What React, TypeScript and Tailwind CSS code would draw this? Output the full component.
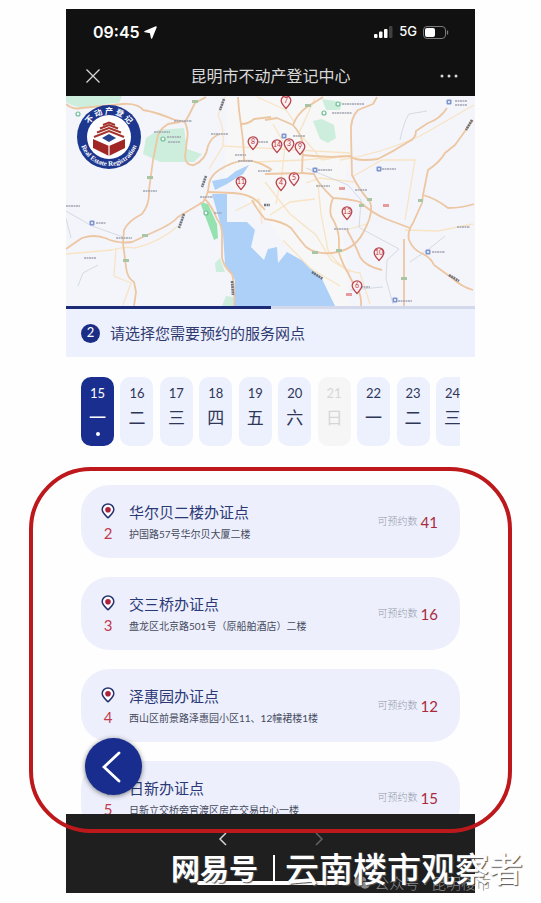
import { useState } from "react";

const DAYS = [
  { date: 15, day: "一" },
  { date: 16, day: "二" },
  { date: 17, day: "三" },
  { date: 18, day: "四" },
  { date: 19, day: "五" },
  { date: 20, day: "六" },
  { date: 21, day: "日", closed: true },
  { date: 22, day: "一" },
  { date: 23, day: "二" },
  { date: 24, day: "三" },
];

const OFFICES = [
  { id: 2, name: "华尔贝二楼办证点", address: "护国路57号华尔贝大厦二楼", left: 41 },
  { id: 3, name: "交三桥办证点", address: "盘龙区北京路501号（原船舶酒店）二楼", left: 16 },
  { id: 4, name: "泽惠园办证点", address: "西山区前景路泽惠园小区11、12幢裙楼1楼", left: 12 },
  { id: 5, name: "日新办证点", address: "日新立交桥旁官渡区房产交易中心一楼", left: 15 },
];

const PINS = [
  { n: 7, x: 286, y: 102 },
  { n: 8, x: 253, y: 143 },
  { n: 14, x: 277, y: 146 },
  { n: 3, x: 289, y: 145 },
  { n: 9, x: 300, y: 148 },
  { n: 11, x: 241, y: 183 },
  { n: 4, x: 281, y: 184 },
  { n: 5, x: 294, y: 179 },
  { n: 13, x: 347, y: 213 },
  { n: 10, x: 379, y: 254 },
  { n: 6, x: 357, y: 287 },
];

const MAIN_ROADS = [
  "M66 104Q72 110 82 108L123 104Q138 103 143 110Q156 112 175 120L185 122L189 115L195 103L206 97",
  "M185 122Q189 132 187 140L185 157Q186 166 194 165Q206 160 208 146Q211 137 220 134",
  "M180 122L168 124Q158 130 157 140L153 160L149 190Q150 204 142 214Q128 221 124 230L123 243L126 267Q127 278 134 282L136 292L134 306",
  "M66 249Q76 242 82 238Q94 234 105 238Q118 244 132 242Q145 236 156 231Q172 224 178 217L203 202Q208 196 209 184Q210 174 226 166Q240 159 252 161Q264 164 272 170",
  "M238 97L239 110L241 125Q244 145 244 160",
  "M241 124Q249 124 254 119L271 117",
  "M204 198Q212 206 217 219Q223 226 222 240L222 258Q224 267 232 274Q235 284 234 306",
  "M208 192L233 193Q250 194 258 202L265 210",
  "M252 200Q257 210 265 219Q282 221 291 228Q300 240 306 247Q318 256 338 252Q356 248 364 231Q374 213 370 202",
  "M265 120L277 118L293 125Q301 134 303 144L302 173L265 174",
  "M293 125Q297 114 307 107L323 97",
  "M377 97L373 104L358 110Q350 118 351 134L352 175Q358 188 370 202",
  "M302 155Q328 158 350 156Q356 162 378 159Q394 151 408 142Q416 139 416 131L428 123Q440 119 447 108",
  "M473 120L455 145L445 153Q440 162 428 170L423 195L422 203L413 223Q407 232 409 240Q413 250 423 254Q431 258 434 265Q445 273 452 278Q462 287 473 290",
  "M423 195Q435 198 448 208Q462 208 474 204",
  "M302 173L314 174Q318 184 333 198Q350 199 360 202Q372 213 386 219L410 228",
  "M333 198Q329 207 331 216Q339 229 339 240L339 253Q343 265 348 273L354 285Q362 293 361 306",
  "M347 230Q356 246 360 257Q365 266 382 270",
  "M404 239L404 306",
];

const MINOR_ROADS = [
  "M225 97L218 115Q225 130 223 146L209 169",
  "M66 254L112 250Q125 246 135 248Q160 242 178 226",
  "M116 248L114 276L131 283L123 305",
  "M255 162Q279 161 304 160L344 156",
  "M223 146L350 153",
  "M273 124L285 145L282 174L276 204",
  "M315 98L299 133L322 160L345 156",
  "M265 182L290 214L316 235L331 260L350 272",
  "M318 184L321 214L328 250Q340 271 360 273L370 304",
  "M270 215L290 202L315 199",
  "M340 160Q380 154 420 136L474 105",
  "M352 177L382 160L415 160L405 220",
  "M306 183L320 178L354 182",
  "M235 211L259 199L262 224",
  "M283 240L310 268L340 286",
  "M346 230L367 224",
  "M405 230L438 231L473 224",
  "M257 97L286 110L295 123",
];

const THIN_LINES = [
  "M66 211L92 226L123 237M66 218L71 238",
  "M78 286L83 273L98 265",
  "M400 140Q404 121 409 114L427 111",
  "M306 168L348 185L361 200L359 228",
  "M360 228L399 249L387 260L386 279L393 304",
  "M350 290L383 287",
  "M410 262L429 249L445 236",
];

// x, y, width of the small place captions
const CAPTIONS = [
  [174, 121, 18], [154, 132, 16], [167, 137, 14], [168, 142, 12], [143, 191, 14],
  [66, 206, 14], [96, 223, 10], [84, 258, 12], [116, 238, 16], [211, 134, 17],
  [235, 155, 11], [238, 161, 15], [256, 142, 12], [200, 197, 13], [258, 171, 13],
  [342, 104, 22], [332, 113, 20], [293, 136, 12], [318, 170, 14], [316, 186, 14],
  [355, 190, 12], [382, 169, 14], [455, 101, 12], [455, 105, 12], [334, 229, 15],
  [457, 227, 13], [432, 252, 13], [361, 287, 9], [398, 301, 14], [214, 213, 8],
];

const MARKERS = [
  [92, 223], [284, 136], [315, 170], [379, 169], [449, 102], [428, 252], [395, 300],
];

function MapPicture() {
  return (
    <svg viewBox="66 96 409 210" className="block w-full" role="img" aria-label="服务网点地图">
      <rect x="66" y="96" width="409" height="210" fill="#f3f5fb" />
      <path d="M227 97H352V150L340 200L350 306H335L300 262L262 215L225 180Z" fill="#f7f7f8" />

      {/* parks */}
      <g fill="#cdeedd">
        <path d="M66 96H122L119 103Q105 103 96 107Q78 110 66 102Z" />
        <path d="M146 138L158 130L184 128L187 149L202 154L194 162L160 162L143 154Z" />
        <path d="M313 121L322 119L334 125L336 138L328 143L320 139Z" />
        <path d="M322 99L342 102L340 110L326 110Z" />
        <path d="M215 263L220 258L225 272L216 272Z" />
        <path d="M222 306L226 296L233 297V306Z" />
      </g>
      <path d="M200 202L208 204L217 224L218 238L214 240Z" fill="#95e2b0" />

      {/* lake */}
      <g fill="#acd0f7">
        <path d="M212 181L227 178L236 171L249 165L243 174L227 184L215 190Z" />
        <path d="M212 194H227V222L247 222L255 230L251 247L264 260L268 249L277 247L278 263L287 252L303 261L322 279L335 306H235V280L225 264L223 233Z" />
      </g>

      <g fill="none" stroke="#f8e4c4" strokeWidth="1.3">
        {MINOR_ROADS.map((d) => (
          <path key={d} d={d} />
        ))}
      </g>
      <g fill="none" stroke="#cdd2dd" strokeWidth="0.8">
        {THIN_LINES.map((d) => (
          <path key={d} d={d} />
        ))}
      </g>
      <g fill="none" stroke="#edc6a2" strokeWidth="1.8" strokeLinejoin="round">
        {MAIN_ROADS.map((d) => (
          <path key={d} d={d} />
        ))}
      </g>

      {/* captions and road shields */}
      <g stroke="#a3a7b3" strokeWidth="1.8" strokeDasharray="2 0.5" opacity="0.75">
        {CAPTIONS.map(([x, y, w]) => (
          <path key={`${x}-${y}`} d={`M${x} ${y}h${w}`} />
        ))}
      </g>
      <g stroke="#555963" strokeWidth="2.6" strokeDasharray="2 0.6" opacity="0.8">
        <path d="M224 99L220 110M206 176L202 187M184 214L179 228M232 281L233 295M472 120L466 130M449 275L459 281M312 272L323 279M264 205h6" />
      </g>
      <g fill="#a9c5a4">
        <rect x="192" y="100" width="6" height="3" />
        <rect x="147" y="176" width="6" height="3" />
        <rect x="142" y="234" width="6" height="3" />
        <rect x="123" y="259" width="6" height="3" />
        <rect x="305" y="104" width="6" height="3" />
        <rect x="367" y="198" width="5" height="3" />
        <rect x="359" y="204" width="5" height="3" />
        <rect x="418" y="199" width="5" height="3" />
        <rect x="312" y="251" width="6" height="3" />
        <rect x="336" y="249" width="6" height="3" />
        <rect x="401" y="277" width="6" height="3" />
      </g>
      <g fill="#e59b9e">
        <rect x="339" y="187" width="6" height="3" />
        <rect x="383" y="204" width="6" height="3" />
        <rect x="346" y="293" width="6" height="3" />
      </g>
      {MARKERS.map(([x, y]) => (
        <g key={`${x}-${y}`}>
          <rect x={x - 2.5} y={y - 2.5} width="5" height="5" rx="1" fill="#7e95cf" />
          <circle cx={x} cy={y} r="1" fill="#fff" />
        </g>
      ))}
      <g fill="#f4fff8" stroke="#72bd98" strokeWidth="1.2">
        <circle cx="163" cy="139" r="2" />
        <circle cx="338" cy="104" r="2" />
        <circle cx="324" cy="113" r="2" />
        <circle cx="78" cy="114" r="2" />
        <circle cx="206" cy="213" r="2" />
      </g>

      {PINS.map((p) => (
        <g key={p.n} transform={`translate(${p.x} ${p.y})`}>
          <path
            d="M0 6.600C-2 4.200-4.800 2-4.800-1.400A4.800 4.800 0 0 1 4.800-1.400C4.800 2 2 4.200 0 6.600Z"
            fill="#fbeff0"
            stroke="#b8454d"
            strokeWidth="1.3"
          />
          <text
            y="1.4"
            textAnchor="middle"
            className="fill-[#b8363f] font-['Lato',sans-serif] text-[7px]"
          >
            {p.n}
          </text>
        </g>
      ))}

      {/* registry emblem */}
      <g transform="translate(109 137)">
        <circle r="32" fill="#1d378f" />
        <circle r="22" fill="#fff" />
        <g fill="none" stroke="#a3352c" strokeWidth="2">
          <path d="M-6-12L0-14.500L6-12" />
          <path d="M-9-8.500L0-12L9-8.500" />
          <path d="M-12-4.500L0-9L12-4.500" />
          <path d="M-15 0L0-6L15 0" />
        </g>
        <path d="M-7 1L0-3L7 1L0 5Z" fill="#27438f" />
        <path d="M-16 2L0 9V19L-16 11Z M16 2L0 9V19L16 11Z" fill="#a12727" />
        <path d="M0 9V19" fill="none" stroke="#fff" strokeWidth="1.2" />
        <path id="emblem-top" d="M-23.500 0A23.500 23.500 0 0 1 23.500 0" fill="none" />
        <path id="emblem-bottom" d="M-29 0A29 29 0 0 0 29 0" fill="none" />
        <text
          textAnchor="middle"
          className="fill-white font-['Noto_Sans_CJK_SC',sans-serif] text-[8px] font-bold"
        >
          <textPath href="#emblem-top" startOffset="50%">
            不 动 产 登 记
          </textPath>
        </text>
        <text
          textAnchor="middle"
          className="fill-white font-['Liberation_Serif',serif] text-[7px] font-bold"
        >
          <textPath href="#emblem-bottom" startOffset="50%">
            Real Estate Registration
          </textPath>
        </text>
      </g>
    </svg>
  );
}

function StatusBar() {
  return (
    <div className="flex h-[46px] items-center justify-between pl-[27px] pr-[26px] text-white">
      <div className="flex items-center gap-1">
        <span className="font-['Inter',sans-serif] text-[16px] font-semibold">09:45</span>
        <svg viewBox="0 0 14 14" className="size-[13px]" fill="currentColor" aria-hidden="true">
          <path
            d="M13 1L8.200 13L7 7L1 6Z"
            stroke="currentColor"
            strokeWidth="1.500"
            strokeLinejoin="round"
          />
        </svg>
      </div>
      <div className="flex items-center gap-[6px]">
        <svg viewBox="0 0 19 12" className="h-[12px] w-[19px]" fill="currentColor" aria-hidden="true">
          <rect x="0" y="8" width="3.500" height="4" rx="1" />
          <rect x="5" y="5.500" width="3.500" height="6.500" rx="1" />
          <rect x="10" y="3" width="3.500" height="9" rx="1" />
          <rect x="15" y="0" width="3.500" height="12" rx="1" opacity="0.2" />
        </svg>
        <span className="font-['Inter',sans-serif] text-[13px] font-medium">5G</span>
        <svg viewBox="0 0 26 13" className="h-[13px] w-[26px]" aria-hidden="true">
          <rect x="0.500" y="0.500" width="22" height="12" rx="3.500" fill="none" stroke="#7b7b7b" />
          <rect x="2" y="2" width="10" height="9" rx="2" fill="#fff" />
          <path d="M24.500 4.500V8.500" stroke="#7b7b7b" strokeWidth="1.300" />
        </svg>
      </div>
    </div>
  );
}

function PinIcon() {
  return (
    <svg viewBox="0 0 14 16" className="h-[16px] w-[14px]" aria-hidden="true">
      <path
        d="M7 14.800C4.500 12.300 1.200 9.800 1.200 6.500A5.800 5.500 0 0 1 12.800 6.500C12.800 9.800 9.500 12.300 7 14.800Z"
        fill="#fff"
        stroke="#27336e"
        strokeWidth="1.500"
      />
      <circle cx="7" cy="6.800" r="2.800" fill="#b0203f" />
    </svg>
  );
}

export default function App() {
  const [selected, setSelected] = useState(15);

  return (
    <div className="relative flex h-screen flex-col overflow-hidden bg-[#fefefe] px-[66px] pt-[9px] pb-[10px] font-['Lato','Noto_Sans_CJK_SC',sans-serif]">
      <header className="shrink-0 bg-[#111111]">
        <StatusBar />
        <div className="flex h-[41px] items-center justify-between pr-[17px] pl-[19px] text-[#d8d8d8]">
          <button type="button" aria-label="关闭">
            <svg viewBox="0 0 16 16" className="size-[16px]" aria-hidden="true">
              <path d="M1.500 1.500L14.500 14.500M14.500 1.500L1.500 14.500" stroke="currentColor" strokeWidth="1.300" />
            </svg>
          </button>
          <h1 className="text-[16px] leading-[20px]">昆明市不动产登记中心</h1>
          <button type="button" aria-label="更多">
            <svg viewBox="0 0 18 4" className="h-[4px] w-[18px]" fill="currentColor" aria-hidden="true">
              <circle cx="2" cy="2" r="1.500" />
              <circle cx="9" cy="2" r="1.500" />
              <circle cx="16" cy="2" r="1.500" />
            </svg>
          </button>
        </div>
      </header>

      <div className="shrink-0">
        <MapPicture />
        <div className="h-[3px] bg-[#d3d8eb]">
          <div className="h-full w-1/2 bg-[#1b2b77]" />
        </div>
      </div>

      <div className="flex h-[48px] shrink-0 items-center gap-[10px] bg-[#edf0fd] px-[15px] text-[#2f3a70]">
        <span className="flex size-[19px] items-center justify-center rounded-full bg-[#1b2d85] text-[13px] text-white">
          2
        </span>
        <h2 className="text-[15px] leading-[20px]">请选择您需要预约的服务网点</h2>
      </div>

      {/* Date strip, scrolls off to the right */}
      <div className="mx-[15px] mt-[20px] shrink-0 overflow-hidden">
        <div className="-mr-[9px] flex justify-between">
          {DAYS.map((d) => (
            <button
              key={d.date}
              type="button"
              disabled={d.closed}
              onClick={() => setSelected(d.date)}
              className={`flex h-[69px] w-[33px] shrink-0 flex-col items-center rounded-[10px] pt-[6px] ${
                d.date === selected
                  ? "bg-[#192e8f] text-white"
                  : d.closed
                    ? "bg-[#f6f6f7] text-[#d6d6d6]"
                    : "bg-[#edf0fd] text-[#2f3758]"
              }`}
            >
              <span className="text-[13px] leading-[20px]">{d.date}</span>
              <span className="mt-[4px] text-[17px] leading-[22px]">{d.day}</span>
              {d.date === selected && <span className="mt-[3px] size-[4px] rounded-full bg-white" />}
            </button>
          ))}
        </div>
      </div>

      {/* Office list */}
      <ul className="mx-[15px] mt-[39px] flex min-h-0 flex-1 flex-col gap-[19px] overflow-hidden">
        {OFFICES.map((o) => (
          <li
            key={o.id}
            className="flex h-[73px] shrink-0 items-center rounded-[28px] bg-[#edf0fc] pr-[22px] pl-[20px]"
          >
            <div className="flex w-[14px] flex-col items-center gap-[4px] pt-[3px]">
              <PinIcon />
              <span className="text-[15px] leading-[20px] text-[#c23a4b]">{o.id}</span>
            </div>
            <div className="ml-[14px] flex-1">
              <h3 className="text-[15px] leading-[24px] text-[#2b3876]">{o.name}</h3>
              <p className="text-[10px] leading-[20px] whitespace-nowrap text-[#454a5c]">{o.address}</p>
            </div>
            <p className="flex items-center gap-[3px] text-[10px] font-light whitespace-nowrap text-[#9398ab]">
              可预约数
              <span className="text-[15px] leading-[20px] font-normal text-[#aa2a3c]">{o.left}</span>
            </p>
          </li>
        ))}
      </ul>

      <footer className="flex h-[79px] shrink-0 flex-col items-center bg-[#1f1f1f] pt-[18px]">
        <nav className="flex gap-[88px]">
          <button type="button" aria-label="后退" className="text-[#d4d4d4]">
            <svg viewBox="0 0 9 14" className="h-[14px] w-[9px]" fill="none" stroke="currentColor" strokeWidth="1.500" aria-hidden="true">
              <path d="M8 1L2 7L8 13" />
            </svg>
          </button>
          <button type="button" aria-label="前进" className="text-[#626262]">
            <svg viewBox="0 0 9 14" className="h-[14px] w-[9px]" fill="none" stroke="currentColor" strokeWidth="1.500" aria-hidden="true">
              <path d="M1 1L7 7L1 13" />
            </svg>
          </button>
        </nav>
        <div className="mt-[35px] h-[4px] w-[148px] rounded-full bg-white" />
      </footer>

      <button
        type="button"
        aria-label="返回"
        className="absolute bottom-[108px] left-[85px] flex size-[57px] items-center justify-center rounded-full bg-[#182d8e] shadow-[0_1px_5px_rgba(0,0,0,0.5)]"
      >
        <svg viewBox="0 0 20 32" className="mr-[4px] h-[32px] w-[20px]" fill="none" stroke="#fff" strokeWidth="2.800" strokeLinecap="round" aria-hidden="true">
          <path d="M17 2L2 16L17 30" />
        </svg>
      </button>

      {/* Red highlight around the list */}
      <div className="pointer-events-none absolute inset-x-[29px] top-[467px] bottom-[70px] rounded-[62px] border-4 border-[#bd191d]" />

      {/* Watermarks */}
      <p className="absolute right-[50px] bottom-[10px] flex items-center gap-[4px] text-[15px] leading-[20px] font-light whitespace-nowrap text-[#8c8c8c]">
        <svg viewBox="0 0 18 16" className="h-[14px] w-[16px]" fill="currentColor" aria-hidden="true">
          <ellipse cx="7" cy="6" rx="7" ry="6" />
          <ellipse cx="12.500" cy="10.500" rx="5.500" ry="4.500" stroke="#1f1f1f" />
        </svg>
        公众号 · 昆明楼市
      </p>
      <p className="absolute right-[18px] bottom-[14px] flex items-center whitespace-nowrap text-white [text-shadow:1px_1px_1px_#555]">
        <span className="text-[29px] leading-[40px] font-bold">网易号</span>
        <span className="mr-[10px] ml-[15px] h-[29px] w-[2px] bg-white" />
        <span className="text-[34px] leading-[40px] font-medium">云南楼市观察者</span>
      </p>
    </div>
  );
}
